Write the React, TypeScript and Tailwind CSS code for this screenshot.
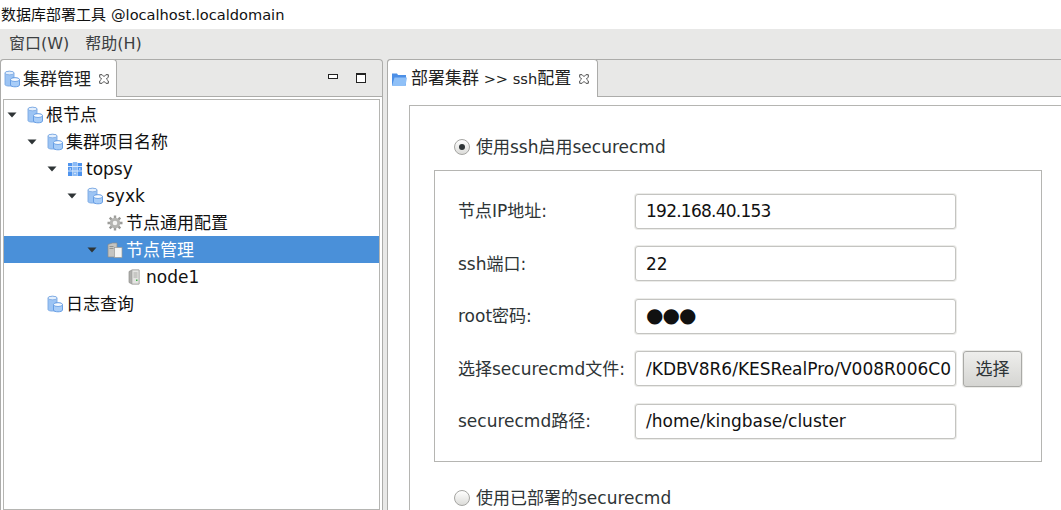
import React from "react";

const FONT = '"DejaVu Sans","Noto Sans CJK SC",sans-serif';

function Db() {
  return (
    <svg width="16" height="18" viewBox="0 0 16 18" className="shrink-0">
      <path d="M1 3C1 .8 10 .8 10 3V14.5C10 16.6 1 16.6 1 14.5Z" fill="#9cc4f4" stroke="#7ba8e2" strokeWidth=".9" />
      <ellipse cx="5.5" cy="3" rx="4.5" ry="1.8" fill="#e3effd" stroke="#7ba8e2" strokeWidth=".8" />
      <path d="M6.5 9.6C6.5 7.4 15.5 7.4 15.5 9.6V15C15.5 17.4 6.5 17.4 6.5 15Z" fill="#a8cdf8" stroke="#5f98e2" strokeWidth=".9" />
      <ellipse cx="11" cy="9.6" rx="4.5" ry="1.9" fill="#f6fafe" stroke="#5f98e2" strokeWidth=".8" />
    </svg>
  );
}

function Cluster() {
  return (
    <svg width="16" height="16" viewBox="0 0 16 16" className="shrink-0">
      <rect x="1" y="2" width="4.4" height="13" fill="#4f94ee" />
      <rect x="5.8" y="1" width="4.4" height="14" fill="#8dbcf6" />
      <rect x="10.6" y="2" width="4.4" height="13" fill="#4f94ee" />
      <path d="M1 5.5h14M1 10h14" stroke="#d9e9fc" strokeWidth="1" />
      <circle cx="3.2" cy="8" r=".7" fill="#fff" />
      <circle cx="8" cy="12.5" r=".7" fill="#fff" />
      <circle cx="12.8" cy="8" r=".7" fill="#fff" />
    </svg>
  );
}

function Gear() {
  return (
    <svg width="16" height="16" viewBox="0 0 16 16" className="shrink-0">
      <g stroke="#9c9c99" strokeWidth="2.4">
        <path d="M8 .5v15M.5 8h15M2.7 2.7l10.6 10.6M13.3 2.7L2.7 13.3" />
      </g>
      <circle cx="8" cy="8" r="5.2" fill="#b4b4b1" />
      <circle cx="8" cy="8" r="2.3" fill="#f4f4f3" />
    </svg>
  );
}

function NodeGroup() {
  return (
    <svg width="16" height="16" viewBox="0 0 16 16" className="shrink-0">
      <path d="M1 2.5L5.5 1H10V15H1Z" fill="#c4c4c1" stroke="#8d8d8a" strokeWidth=".7" />
      <rect x="7.5" y="5.5" width="7.5" height="10" fill="#f4f4f2" stroke="#9a9a97" strokeWidth=".7" />
      <path d="M2.5 4.5h4M2.5 6.5h4" stroke="#858582" strokeWidth=".8" />
    </svg>
  );
}

function Server() {
  return (
    <svg width="16" height="16" viewBox="0 0 16 16" className="shrink-0">
      <path d="M2 2.5L5 1H12V15H5L2 13.5Z" fill="#aeaeab" stroke="#8f8f8c" strokeWidth=".7" />
      <rect x="5" y="1" width="7" height="14" fill="#e4e4e2" stroke="#9a9a97" strokeWidth=".6" />
      <path d="M6.5 4h4M6.5 6h4M6.5 8h4" stroke="#9a9a97" strokeWidth=".8" />
      <rect x="9" y="10.5" width="1.5" height="1.5" fill="#3fb24a" />
    </svg>
  );
}

function Folder() {
  return (
    <svg width="16" height="16" viewBox="0 0 16 16" className="shrink-0">
      <path d="M1 2.5H6L7 4H15V14.5H1Z" fill="#4c8fe6" />
      <path d="M3.5 6.5H16L14.5 15H1Z" fill="#8fc0f7" />
    </svg>
  );
}

function CloseX() {
  return (
    <svg width="10" height="10" viewBox="0 0 10 10" className="shrink-0">
      <path d="M.7.7h2.4L5 2.6 6.9.7h2.4v2.4L7.4 5l1.9 1.9v2.4H6.9L5 7.4 3.1 9.3H.7V6.9L2.6 5 .7 3.1Z" fill="#fff" stroke="#3a3a3a" strokeWidth=".9" />
    </svg>
  );
}

function Arrow() {
  return (
    <svg width="10" height="6" viewBox="0 0 10 6" className="shrink-0">
      <path d="M0.5 0.5H9.5L5 5.5Z" fill="#2e3436" />
    </svg>
  );
}

type RowProps = {
  indent: string;
  arrow?: boolean;
  icon: React.ReactNode;
  label: string;
  selected?: boolean;
};

function TreeRow({ indent, arrow, icon, label, selected }: RowProps) {
  return (
    <div className={`flex h-[27px] items-center ${indent} ${selected ? "bg-[#4a90d9] text-white" : "text-[#111]"}`}>
      <span className="flex w-[20px] shrink-0 items-center">{arrow && <Arrow />}</span>
      {icon}
      <span className="ml-[3px] whitespace-nowrap">{label}</span>
    </div>
  );
}

function Field({
  label,
  value,
  extra,
  valueClass = "",
}: {
  label: string;
  value: string;
  extra?: boolean;
  valueClass?: string;
}) {
  return (
    <div className="flex h-[52.5px] items-center">
      <div className="w-[177px] shrink-0 whitespace-nowrap text-[#2e3436]">{label}</div>
      <div className="box-border flex h-[35px] w-[321px] shrink-0 items-center overflow-hidden rounded-[3px] border border-[#c4c4c1] bg-white pl-[10px] text-[#111] shadow-[0_0_0_1px_#ecece9]">
        <span className={`whitespace-nowrap ${valueClass}`}>{value}</span>
      </div>
      {extra && (
        <div className="ml-[7px] flex h-[36px] w-[59px] shrink-0 items-center justify-center rounded-[3px] border border-[#a9a9a6] bg-gradient-to-b from-[#eeeeec] to-[#d5d5d2] text-[#2e3436] shadow-[0_0_0_1px_#ecece9]">
          选择
        </div>
      )}
    </div>
  );
}

function Radio({ on, label }: { on?: boolean; label: string }) {
  return (
    <div className="flex items-center text-[#2e3436]">
      <span className="flex h-[16px] w-[16px] shrink-0 items-center justify-center rounded-full border border-[#a5a5a2] bg-gradient-to-b from-[#ffffff] to-[#dcdcd9]">
        {on && <span className="h-[6px] w-[6px] rounded-full bg-[#2e3436]" />}
      </span>
      <span className="ml-[6px] whitespace-nowrap">{label}</span>
    </div>
  );
}

export default function App() {
  return (
    <div
      className="flex h-[510px] w-[1061px] flex-col overflow-hidden bg-white text-[17px] leading-[20px]"
      style={{ fontFamily: FONT }}
    >
      <div className="flex h-[29px] shrink-0 items-center pl-[1px] text-[15px] text-[#111]">
        <span>数据库部署工具</span>
        <span className="ml-[5px] text-[14.6px]">@localhost.localdomain</span>
      </div>
      <div className="flex h-[30px] shrink-0 items-center gap-[16px] bg-[#e8e8e7] pl-[9px] text-[16px] text-[#3c4042]">
        <span>窗口(W)</span>
        <span>帮助(H)</span>
      </div>
      <div className="flex min-h-0 flex-1 bg-[#e8e8e7]">
        {/* left panel */}
        <div className="flex w-[383px] shrink-0 flex-col rounded-t-[4px] border-x border-t border-[#acacaa]">
          <div className="flex h-[37px] shrink-0 items-stretch">
            <div className="-ml-px -mt-px flex w-[117px] shrink-0 items-center rounded-t-[4px] border border-b-0 border-[#acacaa] bg-white pl-[3px] text-[#222]">
              <Db />
              <span className="ml-[3px] whitespace-nowrap">集群管理</span>
              <span className="ml-[8px]"><CloseX /></span>
            </div>
            <div className="flex flex-1 items-center justify-end border-b border-[#acacaa] pr-[16px]">
              <span className="mb-[4px] mr-[18px] h-[5px] w-[10px] border border-[#222] bg-white" />
              <span className="h-[10px] w-[10px] border border-[#222] border-t-2 bg-white" />
            </div>
          </div>
          <div className="flex min-h-0 flex-1 flex-col bg-white px-[2px] pt-[2px]">
            <div className="min-h-0 flex-1 border border-[#b5b5b2] bg-white pt-[1px]">
              <TreeRow indent="pl-[3px]" arrow icon={<Db />} label="根节点" />
              <TreeRow indent="pl-[23px]" arrow icon={<Db />} label="集群项目名称" />
              <TreeRow indent="pl-[43px]" arrow icon={<Cluster />} label="topsy" />
              <TreeRow indent="pl-[63px]" arrow icon={<Db />} label="syxk" />
              <TreeRow indent="pl-[83px]" icon={<Gear />} label="节点通用配置" />
              <TreeRow indent="pl-[83px]" arrow icon={<NodeGroup />} label="节点管理" selected />
              <TreeRow indent="pl-[103px]" icon={<Server />} label="node1" />
              <TreeRow indent="pl-[23px]" icon={<Db />} label="日志查询" />
            </div>
          </div>
        </div>
        <div className="w-[4px] shrink-0" />
        {/* right panel */}
        <div className="flex min-w-0 flex-1 flex-col rounded-tl-[4px] border-l border-t border-[#acacaa]">
          <div className="flex h-[37px] shrink-0 items-stretch">
            <div className="-ml-px -mt-px flex w-[211px] shrink-0 items-center rounded-t-[4px] border border-b-0 border-[#acacaa] bg-white pl-[3px] text-[#222]">
              <Folder />
              <span className="ml-[4px] whitespace-nowrap">
                部署集群<span className="text-[14.6px]"> &gt;&gt; ssh</span>配置
              </span>
              <span className="ml-[8px]"><CloseX /></span>
            </div>
            <div className="flex-1 border-b border-[#acacaa]" />
          </div>
          <div className="flex min-h-0 flex-1 flex-col bg-white pl-[21px] pt-[8px]">
            <div className="flex min-h-0 flex-1 flex-col border-l border-t border-[#b5b5b2] pl-[24px] pt-[31px]">
              <div className="ml-[20px] h-[20px]">
                <Radio on label="使用ssh启用securecmd" />
              </div>
              <div className="mt-[13px] h-[292px] w-[608px] shrink-0 border border-[#b5b5b2] px-[23px] pt-[14px]">
                <Field label="节点IP地址:" value="192.168.40.153" valueClass="tracking-[-0.75px]" />
                <Field label="ssh端口:" value="22" />
                <Field label="root密码:" value="●●●" valueClass="-mt-[2px] text-[20px] tracking-[-1px]" />
                <Field label="选择securecmd文件:" value="/KDBV8R6/KESRealPro/V008R006C0" extra />
                <Field label="securecmd路径:" value="/home/kingbase/cluster" />
              </div>
              <div className="ml-[20px] mt-[26px] h-[20px]">
                <Radio label="使用已部署的securecmd" />
              </div>
            </div>
          </div>
        </div>
      </div>
    </div>
  );
}
